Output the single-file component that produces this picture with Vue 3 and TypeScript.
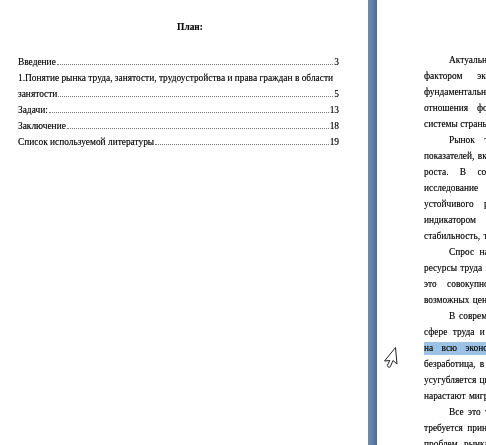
<script setup lang="ts">
interface Entry { text: string; page: string }
const toc: Entry[] = [
  { text: 'Введение', page: '3' },
  { text: 'занятости', page: '5' },
  { text: 'Задачи:', page: '13' },
  { text: 'Заключение', page: '18' },
  { text: 'Список используемой литературы', page: '19' },
]
interface Line { text: string; gap: number; indent?: boolean; mark?: boolean }
const lines: Line[] = [
  { text: 'Актуальность темы исследования', gap: 1, indent: true },
  { text: 'фактором экономического развития', gap: 12.5 },
  { text: 'фундаментальным условием развития', gap: 1 },
  { text: 'отношения формируют основу', gap: 6.5 },
  { text: 'системы страны и её регионов.', gap: 0 },
  { text: 'Рынок труда характеризуется', gap: 7.5, indent: true },
  { text: 'показателей, включая занятость', gap: 1 },
  { text: 'роста. В современных условиях', gap: 9 },
  { text: 'исследование состояния рынка', gap: 7 },
  { text: 'устойчивого развития экономики', gap: 8 },
  { text: 'индикатором благосостояния', gap: 20 },
  { text: 'стабильность, так как занятость', gap: 1 },
  { text: 'Спрос на труд определяется', gap: 3, indent: true },
  { text: 'ресурсы труда предлагаются', gap: 1 },
  { text: 'это совокупность отношений', gap: 8 },
  { text: 'возможных цен на рабочую силу', gap: 1 },
  { text: 'В современных условиях', gap: 1.5, indent: true },
  { text: 'сфере труда и занятости', gap: 3 },
  { text: 'на всю экономику страны', gap: 6, mark: true },
  { text: 'безработица, в том числе', gap: 2 },
  { text: 'усугубляется цикличность', gap: 1 },
  { text: 'нарастают миграционные', gap: 1 },
  { text: 'Все это требует анализа', gap: 2, indent: true },
  { text: 'требуется принятие новых мер', gap: 2 },
  { text: 'проблем рынка труда', gap: 4 },
]
</script>

<template>
  <div class="screen">
    <section class="page left">
      <h1 class="title">План:</h1>
      <div class="toc">
        <div class="row"><span>{{ toc[0].text }}</span><i class="dots"></i><span>{{ toc[0].page }}</span></div>
        <div class="row">1.Понятие рынка труда, занятости, трудоустройства и права граждан в области</div>
        <div v-for="e in toc.slice(1)" :key="e.text" class="row">
          <span>{{ e.text }}</span><i class="dots"></i><span>{{ e.page }}</span>
        </div>
      </div>
    </section>
    <div class="gutter"></div>
    <section class="page right">
      <div class="sheet">
        <div
          v-for="(l, i) in lines"
          :key="i"
          class="line"
          :class="{ indent: l.indent, mark: l.mark }"
          :style="{ wordSpacing: l.gap + 'px' }"
        >{{ l.text }}</div>
      </div>
    </section>
    <svg class="cursor" width="16" height="23" viewBox="0 0 16 23">
      <path d="M12.5 0.5 L14 17 L10 13.5 L7.4 19.6 Q7 20.6 6 20.2 L4.9 19.7 Q4 19.2 4.4 18.3 L6.8 13.5 L1.5 14 Z" fill="#fff" stroke="#222" stroke-width="1" stroke-linejoin="miter" />
    </svg>
  </div>
</template>

<style scoped>
.screen {
  position: relative;
  display: flex;
  width: 486px;
  height: 445px;
  overflow: hidden;
  background: #fff;
  font-family: "Liberation Serif", "Times New Roman", serif;
  font-size: 9.4px;
  color: #0c0c0c;
}
.page {
  background: #fff;
  filter: blur(0.25px);
  text-shadow: 0 0 0.4px rgba(0, 0, 0, 0.55);
}
.left {
  box-sizing: border-box;
  width: 368px;
  padding: 20px 29px 0 18px;
}
.title {
  margin: 0 0 20px;
  padding-left: 23px;
  height: 14px;
  font-size: 9.4px;
  line-height: 14px;
  font-weight: 700;
  text-align: center;
}
.row {
  display: flex;
  align-items: baseline;
  height: 16px;
  line-height: 16px;
  white-space: nowrap;
}
.dots {
  flex: 1;
  margin: 0 1px;
  border-bottom: 1px dotted #777;
  height: 0;
}
.gutter {
  width: 9px;
  flex: none;
  background: linear-gradient(90deg, #6f8ab0 0%, #6380a8 45%, #4c6a94 100%);
}
.right {
  flex: 1;
  min-width: 0;
  overflow: hidden;
  padding: 52px 0 0 47px;
}
.sheet {
  width: 321px;
}
.line {
  height: 16px;
  line-height: 16px;
  white-space: nowrap;
}
.line.indent {
  padding-left: 25px;
}
.line.mark {
  background: linear-gradient(#fff 0, #fff 2px, #9cc3e6 2px, #9cc3e6 15px, #fff 15px);
}
.cursor {
  position: absolute;
  left: 383px;
  top: 347px;
}
</style>
